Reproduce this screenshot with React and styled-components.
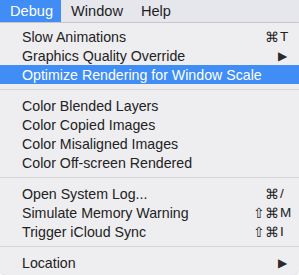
import React from "react";
import styled, { createGlobalStyle } from "styled-components";

const Global = createGlobalStyle`
  body {
    margin: 0;
    background: #ffffff;
    font-family: "Liberation Sans", Arial, sans-serif;
  }
`;

const Screen = styled.div`
  width: 299px;
  height: 275px;
  overflow: hidden;
  background: #ffffff;
`;

const MenuBar = styled.div`
  display: flex;
  height: 22px;
  background: #e6e7ec;
  border-bottom: 1px solid #c9c9cc;
  font-size: 14.6px;
  color: #1e1e1e;
`;

const BarItem = styled.div`
  display: flex;
  align-items: center;
  padding: 0 8px 0 10px;
  background: ${(p) => (p.active ? "#3f8df5" : "transparent")};
  color: ${(p) => (p.active ? "#ffffff" : "#1e1e1e")};
`;

const Panel = styled.div`
  background: #eeeef1;
  border-radius: 0 0 6px 6px;
  padding: 4px 0 5px;
  height: 243px;
  box-shadow: 0 1px 2px rgba(0, 0, 0, 0.15);
`;

const Row = styled.div`
  display: flex;
  align-items: center;
  height: 19px;
  padding: 0 0 0 22px;
  font-size: 14.2px;
  background: ${(p) => (p.active ? "#3f8df5" : "transparent")};
  color: ${(p) => (p.active ? "#ffffff" : "#222222")};
`;

const Label = styled.span`
  flex: 1;
  white-space: nowrap;
`;

const Mods = styled.span`
  text-align: right;
  font-size: 13.5px;
`;

const Key = styled.span`
  width: 19px;
  padding-left: 1px;
  font-size: 13.5px;
`;

const Arrow = styled.span`
  width: 21px;
  font-size: 12px;
  color: #2a2a2a;
`;

const Sep = styled.div`
  height: 1px;
  background: #d5d5d8;
  margin: 5px 0 6px;
`;

function Item({ label, mods, k, sub, active }) {
  return (
    <Row active={active}>
      <Label>{label}</Label>
      {k && (
        <>
          <Mods>{mods}</Mods>
          <Key>{k}</Key>
        </>
      )}
      {sub && <Arrow>▶</Arrow>}
    </Row>
  );
}

export default function App() {
  return (
    <Screen>
      <Global />
      <MenuBar>
        <BarItem active>Debug</BarItem>
        <BarItem>Window</BarItem>
        <BarItem>Help</BarItem>
      </MenuBar>
      <Panel>
        <Item label="Slow Animations" mods="⌘" k="T" />
        <Item label="Graphics Quality Override" sub />
        <Item label="Optimize Rendering for Window Scale" active />
        <Sep />
        <Item label="Color Blended Layers" />
        <Item label="Color Copied Images" />
        <Item label="Color Misaligned Images" />
        <Item label="Color Off-screen Rendered" />
        <Sep />
        <Item label="Open System Log..." mods="⌘" k="/" />
        <Item label="Simulate Memory Warning" mods="⇧⌘" k="M" />
        <Item label="Trigger iCloud Sync" mods="⇧⌘" k="I" />
        <Sep />
        <Item label="Location" sub />
      </Panel>
    </Screen>
  );
}
